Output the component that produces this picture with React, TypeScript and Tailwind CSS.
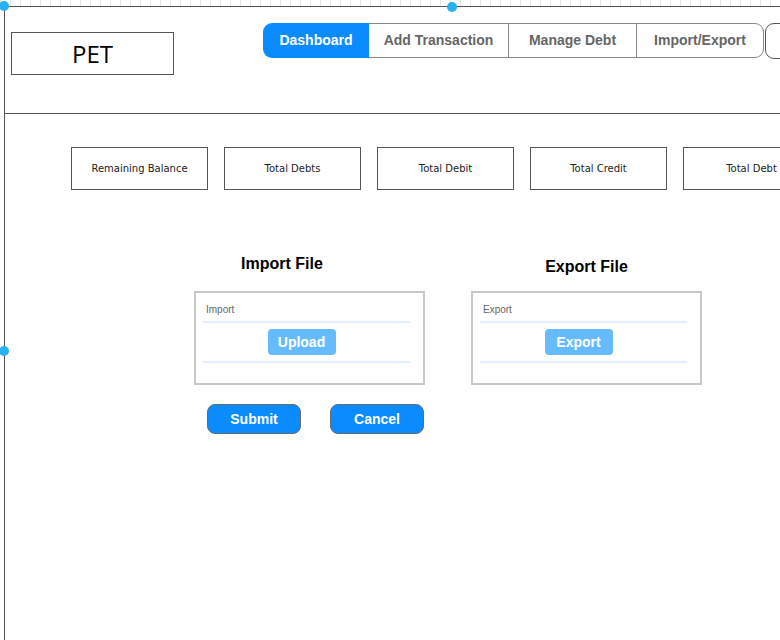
import React from "react";

const stats = ["Remaining Balance", "Total Debts", "Total Debit", "Total Credit", "Total Debt"];

function Handle({ className }: { className: string }) {
  return <div className={"absolute w-[10px] h-[10px] rounded-full bg-[#29b0f5] " + className} />;
}

function FileBox({ label, button }: { label: string; button: string }) {
  return (
    <div className="w-[231px] h-[94px] border-2 border-[#c8c8c8] bg-white pt-[11px] pl-[7px] pr-[13px]">
      <div className="text-[10px] leading-[12px] text-[#666] font-['Liberation_Sans',Arial,sans-serif] pl-[3px]">{label}</div>
      <div className="mt-[5px] h-[2px] bg-[#e2efff]" />
      <div className="flex justify-center pt-[6px] pb-[6px]">
        <div className="w-[68px] h-[26px] rounded-[4px] bg-[#66bbff] text-white font-bold text-[14px] flex items-center justify-center font-['Liberation_Sans',Arial,sans-serif] mr-[10px]">
          {button}
        </div>
      </div>
      <div className="h-[2px] bg-[#e2efff]" />
    </div>
  );
}

export default function App() {
  return (
    <div className="relative w-[780px] h-[640px] overflow-hidden bg-white font-['Liberation_Sans',Arial,sans-serif]">
      <div className="h-[6px] bg-[repeating-linear-gradient(90deg,#e6e6e6_0px,#e6e6e6_1px,transparent_1px,transparent_10px)]" />
      <div className="ml-[4px] h-[634px] border-l border-t border-[#555]">
        {/* header */}
        <div className="h-[107px] border-b border-[#555] flex items-start pt-[16px] pl-[6px]">
          <div className="shrink-0 mt-[9px] w-[163px] h-[43px] border border-[#555] flex items-center justify-center text-[24px] text-black font-['Open_Sans',sans-serif]">
            PET
          </div>
          <div className="shrink-0 ml-[89px] flex h-[35px] text-[14px] font-bold text-[#666]">
            <div className="shrink-0 w-[106px] rounded-l-[9px] bg-[#0a8cff] text-white flex items-center justify-center">Dashboard</div>
            <div className="shrink-0 w-[140px] border-y border-r border-[#888] flex items-center justify-center">Add Transaction</div>
            <div className="shrink-0 w-[128px] border-y border-r border-[#888] flex items-center justify-center">Manage Debt</div>
            <div className="shrink-0 w-[127px] border-y border-r border-[#888] rounded-r-[9px] flex items-center justify-center">Import/Export</div>
            <div className="shrink-0 ml-[1px] w-[40px] h-[36px] border border-[#555] rounded-l-[9px]" />
          </div>
        </div>
        {/* stats */}
        <div className="flex gap-[16px] pl-[66px] pt-[33px]">
          {stats.map((s) => (
            <div
              key={s}
              className="shrink-0 w-[137px] h-[43px] border border-[#555] flex items-center justify-center text-[10px] text-[#222] font-['DejaVu_Sans',Verdana,sans-serif]"
            >
              {s}
            </div>
          ))}
        </div>
        {/* import/export */}
        <div className="flex pl-[189px] pt-[64px]">
          <div className="flex flex-col">
            <div className="h-[20px] pl-[47px] text-[16px] font-bold text-black leading-[20px]">Import File</div>
            <div className="mt-[17px]">
              <FileBox label="Import" button="Upload" />
            </div>
            <div className="flex mt-[19px] pl-[13px] gap-[29px]">
              <div className="w-[94px] h-[30px] rounded-[8px] bg-[#0a8cff] border border-[#6a6a6a] text-white font-bold text-[14px] flex items-center justify-center">Submit</div>
              <div className="w-[94px] h-[30px] rounded-[8px] bg-[#0a8cff] border border-[#6a6a6a] text-white font-bold text-[14px] flex items-center justify-center">Cancel</div>
            </div>
          </div>
          <div className="flex flex-col ml-[46px]">
            <div className="h-[20px] mt-[3px] text-center text-[16px] font-bold text-black leading-[20px]">Export File</div>
            <div className="mt-[14px]">
              <FileBox label="Export" button="Export" />
            </div>
          </div>
        </div>
      </div>
      <Handle className="left-[-1px] top-[1px]" />
      <Handle className="left-[447px] top-[2px]" />
      <Handle className="left-[-1px] top-[346px]" />
    </div>
  );
}
